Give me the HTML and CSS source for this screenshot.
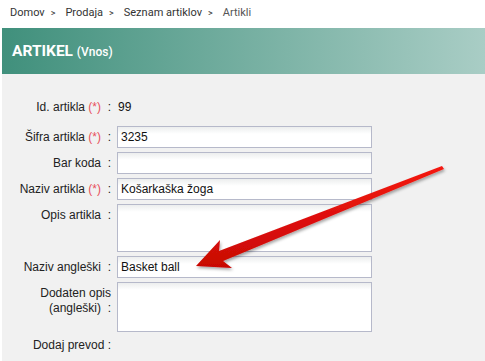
FILE: index.html
```html
<!DOCTYPE html>
<html lang="sl">
<head>
    <meta charset="UTF-8">
    <meta name="viewport" content="width=device-width, initial-scale=1.0">
    <title>Artikel - Vnos</title>
    <link rel="stylesheet" href="styles.css">
</head>
<body>
    <div class="breadcrumb">
        <a href="#">Domov</a><span class="sep">&gt;</span>
        <a href="#">Prodaja</a><span class="sep">&gt;</span>
        <a href="#">Seznam artiklov</a><span class="sep">&gt;</span>
        <span class="current">Artikli</span>
    </div>
    <div class="title-bar">
        <h1>ARTIKEL <small>(Vnos)</small></h1>
    </div>
    <form class="article-form">
        <label class="lbl">Id. artikla <span class="req">(*)</span>&nbsp; :</label>
        <div class="value">99</div>

        <label class="lbl" for="sifra">Šifra artikla <span class="req">(*)</span>&nbsp; :</label>
        <input type="text" id="sifra" value="3235">

        <label class="lbl" for="barkoda">Bar koda&nbsp; :</label>
        <input type="text" id="barkoda">

        <label class="lbl" for="naziv">Naziv artikla <span class="req">(*)</span>&nbsp; :</label>
        <input type="text" id="naziv" value="Košarkaška žoga">

        <label class="lbl" for="opis">Opis artikla&nbsp; :</label>
        <textarea id="opis" class="short"></textarea>

        <label class="lbl" for="nazivAng">Naziv angleški&nbsp; :</label>
        <input type="text" id="nazivAng" value="Basket ball">

        <label class="lbl" for="opisAng">Dodaten opis (angleški)&nbsp; :</label>
        <textarea id="opisAng"></textarea>

        <label class="lbl last">Dodaj prevod :</label>
        <div class="value"></div>
    </form>

    <svg class="arrow" width="485" height="361" viewBox="0 0 485 361">
        <defs>
            <linearGradient id="arrowFill" x1="0" y1="0" x2="0" y2="1">
                <stop offset="0" stop-color="#f41a12"/>
                <stop offset="1" stop-color="#c80604"/>
            </linearGradient>
            <filter id="arrowShadow" x="-10%" y="-10%" width="120%" height="130%">
                <feDropShadow dx="1" dy="2" stdDeviation="1.5" flood-color="#000" flood-opacity="0.35"/>
            </filter>
        </defs>
        <polygon fill="url(#arrowFill)" filter="url(#arrowShadow)"
                 points="196,266 220,240 219,251 442,166 444,169 223,261 232,268"/>
    </svg>
</body>
</html>
```

FILE: styles.css
```css
body {
    margin: 0;
    font-family: "Liberation Sans", Arial, sans-serif;
    font-size: 12px;
    color: #222;
    background-color: #fff;
    position: relative;
    min-height: 361px;
}
.breadcrumb {
    height: 28px;
    display: flex;
    align-items: center;
    padding-left: 10px;
    padding-bottom: 4px;
    box-sizing: border-box;
    font-family: Roboto, Arial, sans-serif;
    font-size: 11px;
    color: #333;
}
.breadcrumb a {
    color: #333;
    text-decoration: none;
}
.breadcrumb .sep {
    font-size: 9px;
    margin: 2px 10px 0 6px;
}
.breadcrumb .current {
    color: #555;
}
.title-bar {
    margin-left: 2px;
    height: 46px;
    background: linear-gradient(to right, #40907c, #a9cdc5);
    display: flex;
    align-items: center;
    padding-left: 10px;
}
.title-bar h1 {
    margin: 0;
    font-family: Roboto, Arial, sans-serif;
    font-size: 15.5px;
    font-weight: 700;
    color: #fff;
}
.title-bar small {
    font-size: 12px;
    font-weight: 500;
}
.article-form {
    margin-left: 2px;
    background-color: #f1f1f1;
    min-height: 287px;
    box-sizing: border-box;
    padding-top: 22px;
    display: grid;
    grid-template-columns: 109px 255px;
    column-gap: 6px;
    row-gap: 4px;
    align-content: start;
}
.lbl {
    text-align: right;
    padding-top: 4px;
    line-height: 15px;
    color: #222;
}
.lbl.last {
    padding-top: 2px;
}
.req {
    color: #e8505b;
}
.value {
    height: 26px;
    padding-top: 4px;
    padding-left: 1px;
    line-height: 15px;
    box-sizing: border-box;
    color: #111;
}
.article-form input,
.article-form textarea {
    box-sizing: border-box;
    width: 255px;
    height: 22px;
    margin: 0;
    padding: 1px 3px;
    border: 1px solid #b6b9ca;
    border-radius: 0;
    background: linear-gradient(#eceeee, #fff 7px);
    font-family: "Liberation Sans", Arial, sans-serif;
    font-size: 12px;
    color: #111;
    resize: none;
    outline: none;
}
.article-form textarea {
    height: 50px;
    display: block;
}
.article-form textarea.short {
    height: 48px;
}
.arrow {
    position: absolute;
    top: 0;
    left: 0;
    pointer-events: none;
}
```
